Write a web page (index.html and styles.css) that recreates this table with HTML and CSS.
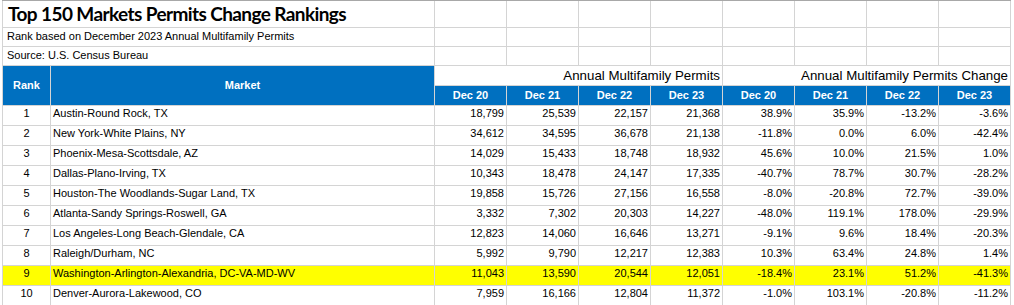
FILE: index.html
```html
<!DOCTYPE html>
<html>
<head>
<meta charset="utf-8">
<link rel="stylesheet" href="styles.css">
</head>
<body>
<div class="sheet">
  <div class="c title span2">Top 150 Markets Permits Change Rankings</div>
  <div class="c"></div><div class="c"></div><div class="c"></div><div class="c"></div><div class="c"></div><div class="c"></div><div class="c"></div><div class="c"></div>
  <div class="c note span2">Rank based on December 2023 Annual Multifamily Permits</div>
  <div class="c"></div><div class="c"></div><div class="c"></div><div class="c"></div><div class="c"></div><div class="c"></div><div class="c"></div><div class="c"></div>
  <div class="c note span2">Source: U.S. Census Bureau</div>
  <div class="c"></div><div class="c"></div><div class="c"></div><div class="c"></div><div class="c"></div><div class="c"></div><div class="c"></div><div class="c"></div>

  <div class="c head tall">Rank</div>
  <div class="c head tall">Market</div>
  <div class="c group span4">Annual Multifamily Permits</div>
  <div class="c group span4">Annual Multifamily Permits Change</div>
  <div class="c head">Dec 20</div><div class="c head">Dec 21</div><div class="c head">Dec 22</div><div class="c head">Dec 23</div>
  <div class="c head">Dec 20</div><div class="c head">Dec 21</div><div class="c head">Dec 22</div><div class="c head">Dec 23</div>

  <div class="row"><div class="c rk">1</div><div class="c mk">Austin-Round Rock, TX</div><div class="c n">18,799</div><div class="c n">25,539</div><div class="c n">22,157</div><div class="c n">21,368</div><div class="c n">38.9%</div><div class="c n">35.9%</div><div class="c n">-13.2%</div><div class="c n">-3.6%</div></div>
  <div class="row"><div class="c rk">2</div><div class="c mk">New York-White Plains, NY</div><div class="c n">34,612</div><div class="c n">34,595</div><div class="c n">36,678</div><div class="c n">21,138</div><div class="c n">-11.8%</div><div class="c n">0.0%</div><div class="c n">6.0%</div><div class="c n">-42.4%</div></div>
  <div class="row"><div class="c rk">3</div><div class="c mk">Phoenix-Mesa-Scottsdale, AZ</div><div class="c n">14,029</div><div class="c n">15,433</div><div class="c n">18,748</div><div class="c n">18,932</div><div class="c n">45.6%</div><div class="c n">10.0%</div><div class="c n">21.5%</div><div class="c n">1.0%</div></div>
  <div class="row"><div class="c rk">4</div><div class="c mk">Dallas-Plano-Irving, TX</div><div class="c n">10,343</div><div class="c n">18,478</div><div class="c n">24,147</div><div class="c n">17,335</div><div class="c n">-40.7%</div><div class="c n">78.7%</div><div class="c n">30.7%</div><div class="c n">-28.2%</div></div>
  <div class="row"><div class="c rk">5</div><div class="c mk">Houston-The Woodlands-Sugar Land, TX</div><div class="c n">19,858</div><div class="c n">15,726</div><div class="c n">27,156</div><div class="c n">16,558</div><div class="c n">-8.0%</div><div class="c n">-20.8%</div><div class="c n">72.7%</div><div class="c n">-39.0%</div></div>
  <div class="row"><div class="c rk">6</div><div class="c mk">Atlanta-Sandy Springs-Roswell, GA</div><div class="c n">3,332</div><div class="c n">7,302</div><div class="c n">20,303</div><div class="c n">14,227</div><div class="c n">-48.0%</div><div class="c n">119.1%</div><div class="c n">178.0%</div><div class="c n">-29.9%</div></div>
  <div class="row"><div class="c rk">7</div><div class="c mk">Los Angeles-Long Beach-Glendale, CA</div><div class="c n">12,823</div><div class="c n">14,060</div><div class="c n">16,646</div><div class="c n">13,271</div><div class="c n">-9.1%</div><div class="c n">9.6%</div><div class="c n">18.4%</div><div class="c n">-20.3%</div></div>
  <div class="row"><div class="c rk">8</div><div class="c mk">Raleigh/Durham, NC</div><div class="c n">5,992</div><div class="c n">9,790</div><div class="c n">12,217</div><div class="c n">12,383</div><div class="c n">10.3%</div><div class="c n">63.4%</div><div class="c n">24.8%</div><div class="c n">1.4%</div></div>
  <div class="row hl"><div class="c rk">9</div><div class="c mk">Washington-Arlington-Alexandria, DC-VA-MD-WV</div><div class="c n">11,043</div><div class="c n">13,590</div><div class="c n">20,544</div><div class="c n">12,051</div><div class="c n">-18.4%</div><div class="c n">23.1%</div><div class="c n">51.2%</div><div class="c n">-41.3%</div></div>
  <div class="row"><div class="c rk">10</div><div class="c mk">Denver-Aurora-Lakewood, CO</div><div class="c n">7,959</div><div class="c n">16,166</div><div class="c n">12,804</div><div class="c n">11,372</div><div class="c n">-1.0%</div><div class="c n">103.1%</div><div class="c n">-20.8%</div><div class="c n">-11.2%</div></div>
</div>
</body>
</html>
```

FILE: styles.css
```css
html, body {
  margin: 0;
  padding: 0;
  background: #ffffff;
}

body {
  font-family: "Liberation Sans", Arial, sans-serif;
  color: #000000;
}

.sheet {
  margin-left: 2px;
  display: grid;
  grid-template-columns: 47px 383px repeat(8, 71px);
  grid-template-rows: 26px 18px 18px 19px 19px repeat(10, 19px);
  gap: 1px;
  padding: 0 1px 1px 1px;
  box-sizing: border-box;
  width: 1009px;
  background: #d4d4d4;
  border-top: 1px solid #a8a8a8;
}

.row {
  display: contents;
}

.c {
  background: #ffffff;
  font-size: 11px;
  line-height: 15px;
  white-space: nowrap;
  overflow: hidden;
}

.span2 { grid-column: span 2; }
.span4 { grid-column: span 4; }
.tall { grid-row: span 2; }

.title {
  font-family: Lato, "Liberation Sans", sans-serif;
  font-weight: 700;
  font-size: 19px;
  letter-spacing: -0.6px;
  line-height: 25px;
  padding-left: 5px;
}

.note {
  padding-left: 4px;
  line-height: 17px;
}

.head {
  background: #0070c0;
  color: #ffffff;
  font-weight: 700;
  display: flex;
  align-items: center;
  justify-content: center;
  line-height: 19px;
}

.group {
  font-size: 13.3px;
  line-height: 20px;
  text-align: right;
  padding-right: 2px;
}

.rk { text-align: center; }
.mk { padding-left: 2px; }
.n { text-align: right; padding-right: 2px; }

.hl .c { background: #ffff00; }
```
